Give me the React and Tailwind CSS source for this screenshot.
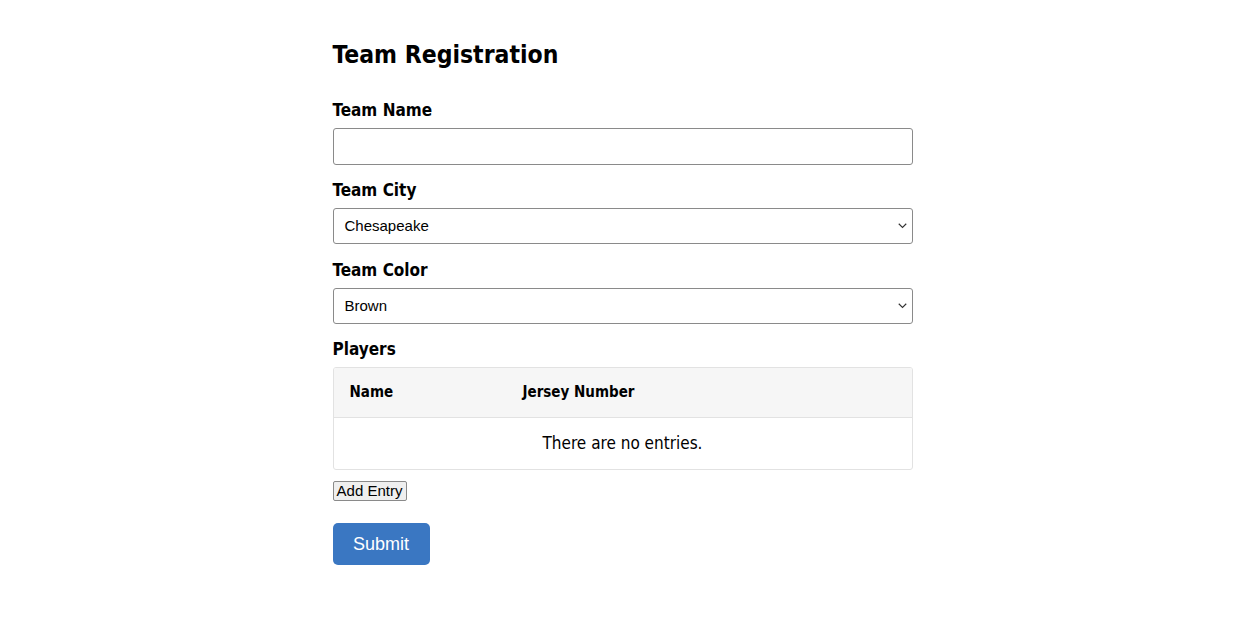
import React from "react";

const lucida = { fontFamily: '"DejaVu Sans Condensed", "DejaVu Sans", "Liberation Sans", sans-serif' };
const arial = { fontFamily: '"Liberation Sans", Arial, sans-serif' };

function Chevron() {
  return (
    <svg width="9" height="6" viewBox="0 0 9 6" className="absolute right-[5px] top-1/2 -translate-y-1/2" fill="none">
      <path d="M0.75 0.75l3.75 3.75 3.75-3.75" stroke="#333" strokeWidth="1.1" />
    </svg>
  );
}

function SelectBox({ value }) {
  return (
    <div className="relative h-[36px] w-full rounded-[3px] border border-[#8a8a8a] bg-white flex items-center pl-[11px] text-[15px] text-black" style={arial}>
      {value}
      <Chevron />
    </div>
  );
}

export default function App() {
  return (
    <div className="min-h-screen bg-white">
      <div className="mx-auto w-[580px] pt-[38px]">
        <h1 className="text-[24.5px] font-bold text-black leading-[34px]" style={lucida}>Team Registration</h1>

        <label className="mt-[27px] block text-[17px] font-bold text-black leading-[22px]" style={lucida}>Team Name</label>
        <div className="mt-[7px] h-[37px] w-full rounded-[3px] border border-[#8a8a8a] bg-white" />

        <label className="mt-[14px] block text-[17px] font-bold text-black leading-[22px]" style={lucida}>Team City</label>
        <div className="mt-[7px]"><SelectBox value="Chesapeake" /></div>

        <label className="mt-[15px] block text-[17px] font-bold text-black leading-[22px]" style={lucida}>Team Color</label>
        <div className="mt-[7px]"><SelectBox value="Brown" /></div>

        <label className="mt-[14px] block text-[17px] font-bold text-black leading-[22px]" style={lucida}>Players</label>
        <div className="mt-[7px] w-full rounded-[3px] border border-[#e2e2e2] overflow-hidden" style={lucida}>
          <div className="flex h-[50px] items-center bg-[#f6f6f6] border-b border-[#e2e2e2] text-[15px] font-bold text-black">
            <div className="w-[189px] pl-[16px]">Name</div>
            <div>Jersey Number</div>
          </div>
          <div className="flex h-[51px] items-center justify-center text-[17px] text-black">There are no entries.</div>
        </div>

        <button className="mt-[11px] block h-[20px] w-[74px] rounded-[2px] border border-[#8a8a8a] bg-[#efefef] p-0 text-[15px] leading-[18px] text-black" style={arial}>Add Entry</button>

        <button className="mt-[22px] block h-[42px] w-[97px] rounded-[5px] bg-[#3a77c2] text-[18px] text-white" style={arial}>Submit</button>
      </div>
    </div>
  );
}
